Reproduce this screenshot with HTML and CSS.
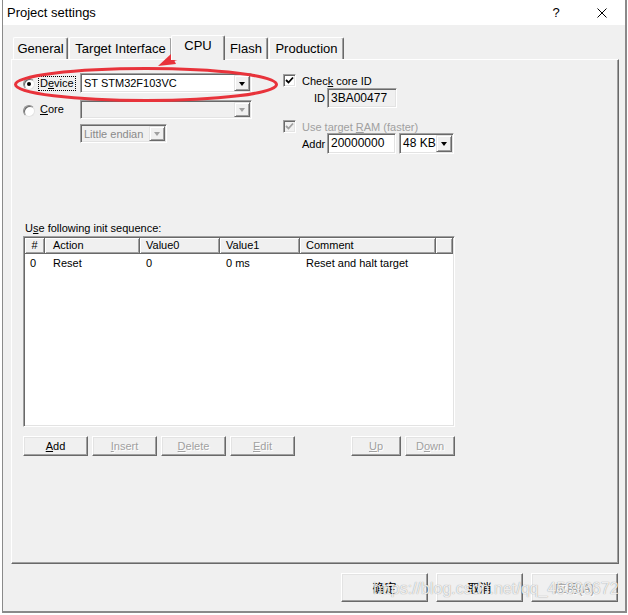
FILE: index.html
```html
<!DOCTYPE html>
<html lang="en">
<head>
  <meta charset="UTF-8" />
  <title>Project settings</title>
  <link rel="stylesheet" href="styles.css">
</head>
<body>
  <div class="window">
    <div class="titlebar">
      <span class="title">Project settings</span>
      <span class="tb-btn">?</span>
      <span class="tb-btn">
        <svg width="10" height="10" viewBox="0 0 10 10"><path d="M0.5 0.5 L9.5 9.5 M9.5 0.5 L0.5 9.5" stroke="#000" stroke-width="1"/></svg>
      </span>
    </div>

    <div class="tabs">
      <div class="tab t-general">General</div>
      <div class="tab t-target">Target Interface</div>
      <div class="tab t-cpu active">CPU</div>
      <div class="tab t-flash">Flash</div>
      <div class="tab t-prod">Production</div>
    </div>

    <div class="panel">
      <div class="top">
        <div class="cpu-left">
          <div class="row r1">
            <div class="opt"><span class="radio checked"></span><span class="opt-text focus">D<u>e</u>vice</span></div>
            <div class="combo w-dev"><span class="val">ST STM32F103VC</span><span class="drop"></span></div>
          </div>
          <div class="row r2">
            <div class="opt"><span class="radio"></span><span class="opt-text"><u>C</u>ore</span></div>
            <div class="combo w-dev disabled"><span class="val"></span><span class="drop"></span></div>
          </div>
          <div class="row r3">
            <div class="combo w-endian disabled"><span class="val">Little endian</span><span class="drop"></span></div>
          </div>
        </div>

        <div class="cpu-right">
          <div class="chk-row">
            <span class="chk"><svg width="9" height="9" viewBox="0 0 9 9"><path d="M1 4 L3.5 6.5 L8 1.5" fill="none" stroke="#000" stroke-width="1.8"/></svg></span>
            <span>Chec<u>k</u> core ID</span>
          </div>
          <div class="field-row id-row">
            <span class="lbl lbl-id">ID</span>
            <span class="field readonly">3BA00477</span>
          </div>
          <div class="chk-row ram-row disabled">
            <span class="chk"><svg width="9" height="9" viewBox="0 0 9 9"><path d="M1 4 L3.5 6.5 L8 1.5" fill="none" stroke="#a0a0a0" stroke-width="1.8"/></svg></span>
            <span>Use target <u>R</u>AM (faster)</span>
          </div>
          <div class="field-row addr-row">
            <span class="lbl lbl-addr">Addr</span>
            <span class="field addr">20000000</span>
            <div class="combo w-size"><span class="val">48 KB</span><span class="drop"></span></div>
          </div>
        </div>
      </div>

      <div class="seq-label">U<u>s</u>e following init sequence:</div>
      <div class="list">
        <div class="list-head">
          <span class="cell c0 center">#</span>
          <span class="cell c1">Action</span>
          <span class="cell c2">Value0</span>
          <span class="cell c3">Value1</span>
          <span class="cell c4">Comment</span>
          <span class="cell c5"></span>
        </div>
        <div class="list-row">
          <span class="cell c0">0</span>
          <span class="cell c1">Reset</span>
          <span class="cell c2">0</span>
          <span class="cell c3">0 ms</span>
          <span class="cell c4">Reset and halt target</span>
        </div>
      </div>

      <div class="btns">
        <button class="btn"><u>A</u>dd</button>
        <button class="btn off"><u>I</u>nsert</button>
        <button class="btn off"><u>D</u>elete</button>
        <button class="btn off"><u>E</u>dit</button>
        <button class="btn sm up off"><u>U</u>p</button>
        <button class="btn sm off">D<u>o</u>wn</button>
      </div>
    </div>

    <div class="footer">
      <button class="fbtn">确定</button>
      <button class="fbtn">取消</button>
      <button class="fbtn off">应用(A)</button>
    </div>
  </div>

  <!-- red marks drawn over the screenshot -->
  <svg class="annot" width="628" height="615" viewBox="0 0 628 615">
    <ellipse cx="146" cy="84.5" rx="130.5" ry="16" fill="none" stroke="#e8333b" stroke-width="3"/>
    <path d="M200 51 Q188 55 172 60" fill="none" stroke="#e8333b" stroke-width="3"/>
    <polygon points="158,66 171,54 176,64" fill="#e8333b"/>
  </svg>
  <div class="watermark">https://blog.csdn.net/qq_45396672</div>
</body>
</html>
```

FILE: styles.css
```css
body {
  margin: 0;
  background: #fff;
  font-family: "Liberation Sans", Arial, sans-serif;
  font-size: 11px;
  color: #000;
}

u {
  text-decoration: underline;
  text-underline-offset: 1px;
}

.window {
  margin-left: 2px;
  width: 625px;
  height: 613px;
  box-sizing: border-box;
  background: #f0f0f0;
  border: 1px solid #8a8a8a;
  border-top: 0;
  border-right-width: 2px;
  border-bottom-width: 2px;
}

.titlebar {
  height: 25px;
  background: #fff;
  display: flex;
  align-items: center;
  padding-left: 4px;
  font-size: 13px;
}

.title {
  flex: 1;
}

.tb-btn {
  width: 46px;
  height: 25px;
  display: flex;
  align-items: center;
  justify-content: center;
  font-size: 13px;
}

/* tabs */
.tabs {
  display: flex;
  align-items: flex-end;
  gap: 1px;
  height: 24px;
  margin: 10px 0 0 10px;
}

.tab {
  box-sizing: border-box;
  height: 22px;
  border: 1px solid;
  border-color: #fff #696969 transparent #fff;
  border-bottom: 0;
  border-radius: 2px 2px 0 0;
  box-shadow: inset -1px 0 #a0a0a0;
  font-size: 13px;
  line-height: 20px;
  padding-top: 1px;
  text-align: center;
  background: #f0f0f0;
}

.tab.active {
  height: 25px;
  margin: 0 -2px -1px;
  position: relative;
  z-index: 1;
  padding-top: 0;
}

.t-general { width: 55px; }
.t-target { width: 103px; }
.t-cpu { width: 54px; }
.t-flash { width: 44px; }
.t-prod { width: 75px; }

.panel {
  margin-left: 8px;
  width: 608px;
  height: 505px;
  box-sizing: border-box;
  border: 1px solid;
  border-color: #fff #696969 #696969 #fff;
  box-shadow: inset -1px -1px #a0a0a0;
  padding: 13px 0 0 10px;
}

.top {
  display: flex;
}

.cpu-left {
  width: 261px;
}

.row {
  display: flex;
  align-items: center;
}

.r1 { height: 20px; }
.r2 { height: 19px; margin-top: 7px; }
.r3 { height: 19px; margin-top: 5px; padding-left: 58px; }

.opt {
  width: 58px;
  display: flex;
  align-items: center;
}

.radio {
  width: 12px;
  height: 12px;
  box-sizing: border-box;
  border-radius: 50%;
  border: 1px solid;
  border-color: #8c8c8c #e3e3e3 #e3e3e3 #8c8c8c;
  box-shadow: inset 1px 1px #696969;
  background: #fff;
  margin: 2px 3px 0 1px;
  display: flex;
  align-items: center;
  justify-content: center;
}

.radio.checked::after {
  content: "";
  width: 4px;
  height: 4px;
  border-radius: 50%;
  background: #000;
}

.opt-text {
  border: 1px solid transparent;
  padding: 0 1px;
  line-height: 13px;
}

.opt-text.focus {
  border: 1px dotted #000;
}

/* combo boxes and text fields */
.combo {
  display: flex;
  box-sizing: border-box;
  height: 20px;
  border: 1px solid;
  border-color: #a0a0a0 #fff #fff #a0a0a0;
  box-shadow: inset 1px 1px #696969, inset -1px -1px #e3e3e3;
  padding: 1px;
  background: #fff;
}

.combo .val {
  flex: 1;
  padding-left: 2px;
  line-height: 16px;
  white-space: nowrap;
}

.combo .drop {
  width: 16px;
  box-sizing: border-box;
  border: 1px solid;
  border-color: #e3e3e3 #696969 #696969 #e3e3e3;
  box-shadow: inset 1px 1px #fff, inset -1px -1px #a0a0a0;
  background: #f0f0f0;
  display: flex;
  align-items: center;
  justify-content: center;
}

.combo .drop::after {
  content: "";
  border-left: 3.5px solid transparent;
  border-right: 3.5px solid transparent;
  border-top: 4px solid #000;
  margin-top: 1px;
}

.combo.disabled {
  background: #f0f0f0;
}

.combo.disabled .val {
  color: #8a8a8a;
}

.combo.disabled .drop::after {
  border-top-color: #a0a0a0;
}

.w-dev { width: 172px; }
.w-endian { width: 87px; height: 19px; }
.r2 .combo { height: 19px; }
.w-size { width: 55px; height: 21px; margin-left: 3px; }
.w-size .val { line-height: 17px; font-size: 12px; }

.cpu-right {
  margin-top: 1px;
}

.chk-row {
  display: flex;
  align-items: center;
  gap: 6px;
  height: 13px;
  white-space: nowrap;
}

.chk {
  width: 13px;
  height: 13px;
  box-sizing: border-box;
  border: 1px solid;
  border-color: #a0a0a0 #fff #fff #a0a0a0;
  box-shadow: inset 1px 1px #696969, inset -1px -1px #e3e3e3;
  background: #fff;
  display: flex;
  align-items: center;
  justify-content: center;
}

.ram-row {
  margin-top: 12px;
}

.chk-row.disabled {
  color: #a0a0a0;
}

.chk-row.disabled .chk {
  background: #f0f0f0;
}

.field-row {
  display: flex;
  align-items: center;
}

.id-row {
  margin-top: 1px;
  height: 20px;
}

.addr-row {
  height: 21px;
}

.lbl-id {
  margin-left: 31px;
  width: 13px;
}

.lbl-addr {
  margin-left: 19px;
  width: 25px;
}

.field {
  box-sizing: border-box;
  width: 70px;
  height: 20px;
  border: 1px solid;
  border-color: #a0a0a0 #fff #fff #a0a0a0;
  box-shadow: inset 1px 1px #696969, inset -1px -1px #e3e3e3;
  background: #fff;
  padding-left: 3px;
  line-height: 18px;
  font-size: 12px;
}

.field.readonly {
  background: #f0f0f0;
}

.field.addr {
  width: 69px;
  height: 21px;
  line-height: 19px;
}

/* init sequence list */
.seq-label {
  margin: 67px 0 0 3px;
  line-height: 14px;
}

.list {
  margin: 1px 0 0 1px;
  width: 432px;
  height: 191px;
  box-sizing: border-box;
  border: 1px solid;
  border-color: #a0a0a0 #fff #fff #a0a0a0;
  box-shadow: inset 1px 1px #696969, inset -1px -1px #e3e3e3;
  padding: 1px;
  background: #fff;
}

.list-head {
  display: flex;
  height: 16px;
}

.list-head .cell {
  box-sizing: border-box;
  border-right: 1px solid #696969;
  border-bottom: 1px solid #696969;
  box-shadow: inset 1px 1px #fff, inset -1px -1px #a0a0a0;
  background: #f0f0f0;
  line-height: 14px;
}

.list-row {
  display: flex;
  height: 17px;
  align-items: center;
}

.cell {
  padding-left: 6px;
  white-space: nowrap;
  box-sizing: border-box;
}

.c0 { width: 20px; padding-left: 5px; }
.c1 { width: 95px; padding-left: 8px; }
.c2 { width: 80px; }
.c3 { width: 80px; }
.c4 { width: 136px; }
.c5 { flex: 1; }

.list-head .center {
  padding-left: 0;
  text-align: center;
}

/* buttons */
.btns {
  display: flex;
  gap: 4px;
  margin: 9px 0 0 1px;
}

.btn,
.fbtn {
  box-sizing: border-box;
  border: 1px solid;
  border-color: #fff #696969 #696969 #fff;
  box-shadow: inset -1px -1px #a0a0a0, inset 1px 1px #e3e3e3;
  background: #f0f0f0;
  font-family: "Liberation Sans", Arial, sans-serif;
  font-size: 11px;
  color: #000;
  padding: 0;
  text-align: center;
}

.btn {
  width: 65px;
  height: 20px;
}

.btn.sm {
  width: 50px;
}

.btn.up {
  margin-left: 52px;
}

.btn.off,
.fbtn.off {
  color: #a0a0a0;
  text-shadow: 1px 1px #fff;
}

.footer {
  display: flex;
  justify-content: flex-end;
  gap: 8px;
  margin-top: 9px;
  padding-right: 7px;
}

.fbtn {
  width: 87px;
  height: 29px;
  font-family: "Liberation Sans", "Noto Sans CJK SC", sans-serif;
  font-size: 12px;
}

.annot {
  position: absolute;
  left: 0;
  top: 0;
  pointer-events: none;
}

.watermark {
  position: absolute;
  left: 373px;
  top: 580px;
  font-size: 16px;
  color: rgba(255, 255, 255, 0.85);
  text-shadow: 0 0 1px rgba(0, 0, 0, 0.45);
  pointer-events: none;
}
```
